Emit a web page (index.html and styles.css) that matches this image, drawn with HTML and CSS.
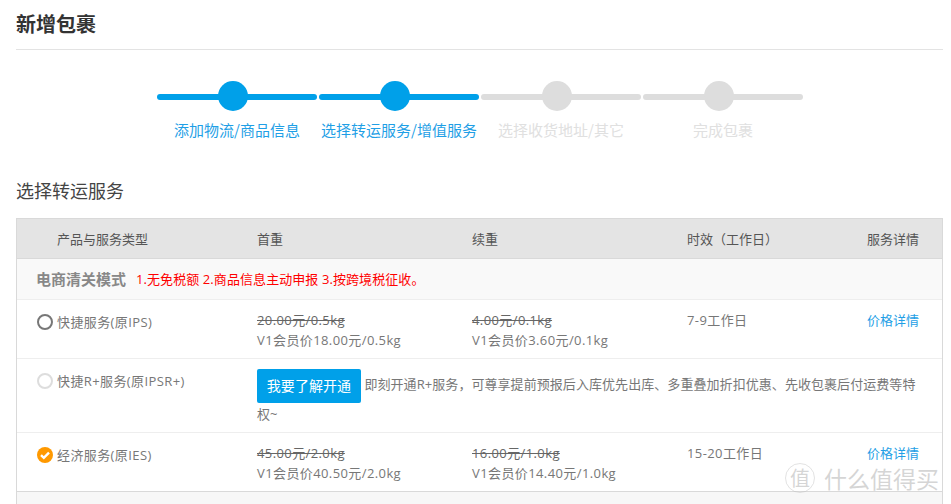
FILE: index.html
```html
<!DOCTYPE html>
<html lang="zh">
<head>
<meta charset="utf-8">
<title>新增包裹</title>
<link rel="stylesheet" href="styles.css">
</head>
<body>
<main class="page">
  <h1 class="title">新增包裹</h1>
  <ol class="steps">
    <li class="step on"><span class="track"><span class="dot"></span></span><span class="label">添加物流/商品信息</span></li>
    <li class="step on"><span class="track"><span class="dot"></span></span><span class="label">选择转运服务/增值服务</span></li>
    <li class="step"><span class="track"><span class="dot"></span></span><span class="label">选择收货地址/其它</span></li>
    <li class="step"><span class="track"><span class="dot"></span></span><span class="label">完成包裹</span></li>
  </ol>
  <h2 class="section">选择转运服务</h2>
  <div class="table">
    <div class="row head">
      <div class="name-head">产品与服务类型</div>
      <div>首重</div>
      <div>续重</div>
      <div>时效<span class="kr">（</span>工作日<span class="kr">）</span></div>
      <div>服务详情</div>
    </div>
    <div class="group"><b>电商清关模式</b><span class="note">1.无免税额 2.商品信息主动申报 3.按跨境税征收。</span></div>
    <div class="row item">
      <div class="name"><span class="radio"></span>快捷服务(原IPS)</div>
      <div class="price"><s>20.00元/0.5kg</s><br>V1会员价18.00元/0.5kg</div>
      <div class="price"><s>4.00元/0.1kg</s><br>V1会员价3.60元/0.1kg</div>
      <div class="price">7-9工作日</div>
      <div class="price"><a href="#">价格详情</a></div>
    </div>
    <div class="row item promo">
      <div class="name"><span class="radio off"></span>快捷R+服务(原IPSR+)</div>
      <div class="promo-text"><a class="btn" href="#">我要了解开通</a> 即刻开通R+服务<span class="tc">，</span>可尊享提前预报后入库优先出库、多重叠加折扣优惠、先收包裹后付运费等特权~</div>
    </div>
    <div class="row item">
      <div class="name"><span class="radio checked"><svg viewBox="0 0 16 16" width="16" height="16"><path d="M4 8.2l2.8 2.7L12 5.6" fill="none" stroke="#fff" stroke-width="2.4"/></svg></span>经济服务(原IES)</div>
      <div class="price"><s>45.00元/2.0kg</s><br>V1会员价40.50元/2.0kg</div>
      <div class="price"><s>16.00元/1.0kg</s><br>V1会员价14.40元/1.0kg</div>
      <div class="price">15-20工作日</div>
      <div class="price"><a href="#">价格详情</a></div>
    </div>
    <div class="foot"></div>
  </div>
</main>
<div class="mark"><span class="seal">值</span><span>什么值得买</span></div>
</body>
</html>
```

FILE: styles.css
```css
* { box-sizing: border-box; }
html, body { margin: 0; height: 504px; overflow: hidden; background: #fff; }
body { font-family: "Open Sans", "Noto Sans CJK SC", sans-serif; color: #666; font-size: 13px; position: relative; }
.page { padding: 0 8px 0 16px; }
.title { margin: 0; height: 50px; border-bottom: 1px solid #e3e3e3; font-family: "Noto Sans CJK SC", sans-serif; font-size: 20px; font-weight: 700; line-height: 47px; color: #333; }
.steps { list-style: none; margin: 0; padding: 31px 0 0 141px; display: flex; gap: 2px; height: 125px; }
.step { width: 160px; display: flex; flex-direction: column; align-items: center; }
.track { width: 160px; height: 30px; position: relative; display: block; }
.track::before { content: ""; position: absolute; left: 0; right: 0; top: 13px; height: 6px; border-radius: 3px; background: #ddd; }
.dot { position: absolute; left: 61px; top: 0; width: 30px; height: 30px; border-radius: 50%; background: #ddd; }
.label { margin-top: 9px; font-family: "Noto Sans CJK SC", sans-serif; font-size: 15px; line-height: 20px; color: #e0e0e0; white-space: nowrap; }
.step.on .track::before, .step.on .dot { background: #00a0e9; }
.step.on .label { color: #1f9fe6; }
.section { margin: 0; height: 43px; font-family: "Noto Sans CJK SC", sans-serif; font-size: 18px; font-weight: 400; line-height: 30px; color: #444; }
.table { width: 927px; border: 1px solid #d9d9d9; border-bottom: 0; }
.row { display: grid; grid-template-columns: 240px 215px 215px 180px 1fr; }
.head { height: 40px; background: #e4e4e4; border-bottom: 1px solid #d9d9d9; line-height: 40px; color: #555; }
.name-head { padding-left: 40px; }
.kr { font-family: "Noto Sans CJK KR", sans-serif; }
.tc { font-family: "Noto Sans CJK TC", sans-serif; }
.group { height: 41px; background: #f9f9f9; border-bottom: 1px solid #eee; padding-left: 19px; display: flex; align-items: center; gap: 10px; line-height: 40px; }
.group b { font-size: 15px; font-weight: 700; color: #888; font-family: "Noto Sans CJK SC", sans-serif; }
.note { color: #f00; font-size: 13px; letter-spacing: .08px; }
.item { border-bottom: 1px solid #eee; height: 59px; padding-top: 10px; line-height: 20px; }
.promo { height: 74px; }
.name { display: flex; align-items: flex-start; padding-left: 20px; line-height: 24px; color: #777; letter-spacing: .4px; }
.radio { flex: none; width: 16px; height: 16px; margin: 4px 4px 0 0; border: 2.5px solid #777; border-radius: 50%; }
.radio.off { border-color: #ddd; }
.radio.checked { border: 0; background: #f90; }
.radio svg { display: block; }
.price { color: #777; letter-spacing: .4px; }
.price s { color: #666; }
.price a { color: #1f9fe6; text-decoration: none; letter-spacing: 0; }
.promo-text { grid-column: 2 / -1; padding-right: 20px; line-height: 22px; color: #777; letter-spacing: .06px; }
.btn { display: inline-block; vertical-align: middle; width: 104px; height: 34px; border-radius: 2px; background: #00a0e9; color: #fff; font-size: 14px; line-height: 34px; text-align: center; text-decoration: none; }
.foot { height: 14px; border-top: 1px solid #d9d9d9; margin-top: -1px; background: #f7f7f7; }
.mark { position: absolute; left: 785px; top: 463px; display: flex; align-items: center; gap: 9px; font-family: "Noto Sans CJK SC", sans-serif; font-size: 23px; line-height: 30px; color: rgba(185, 185, 185, .6); white-space: nowrap; }
.seal { width: 30px; height: 30px; display: flex; align-items: center; justify-content: center; border-radius: 50%; border: 1px solid rgba(190, 190, 190, .45); font-size: 20px; }
```
